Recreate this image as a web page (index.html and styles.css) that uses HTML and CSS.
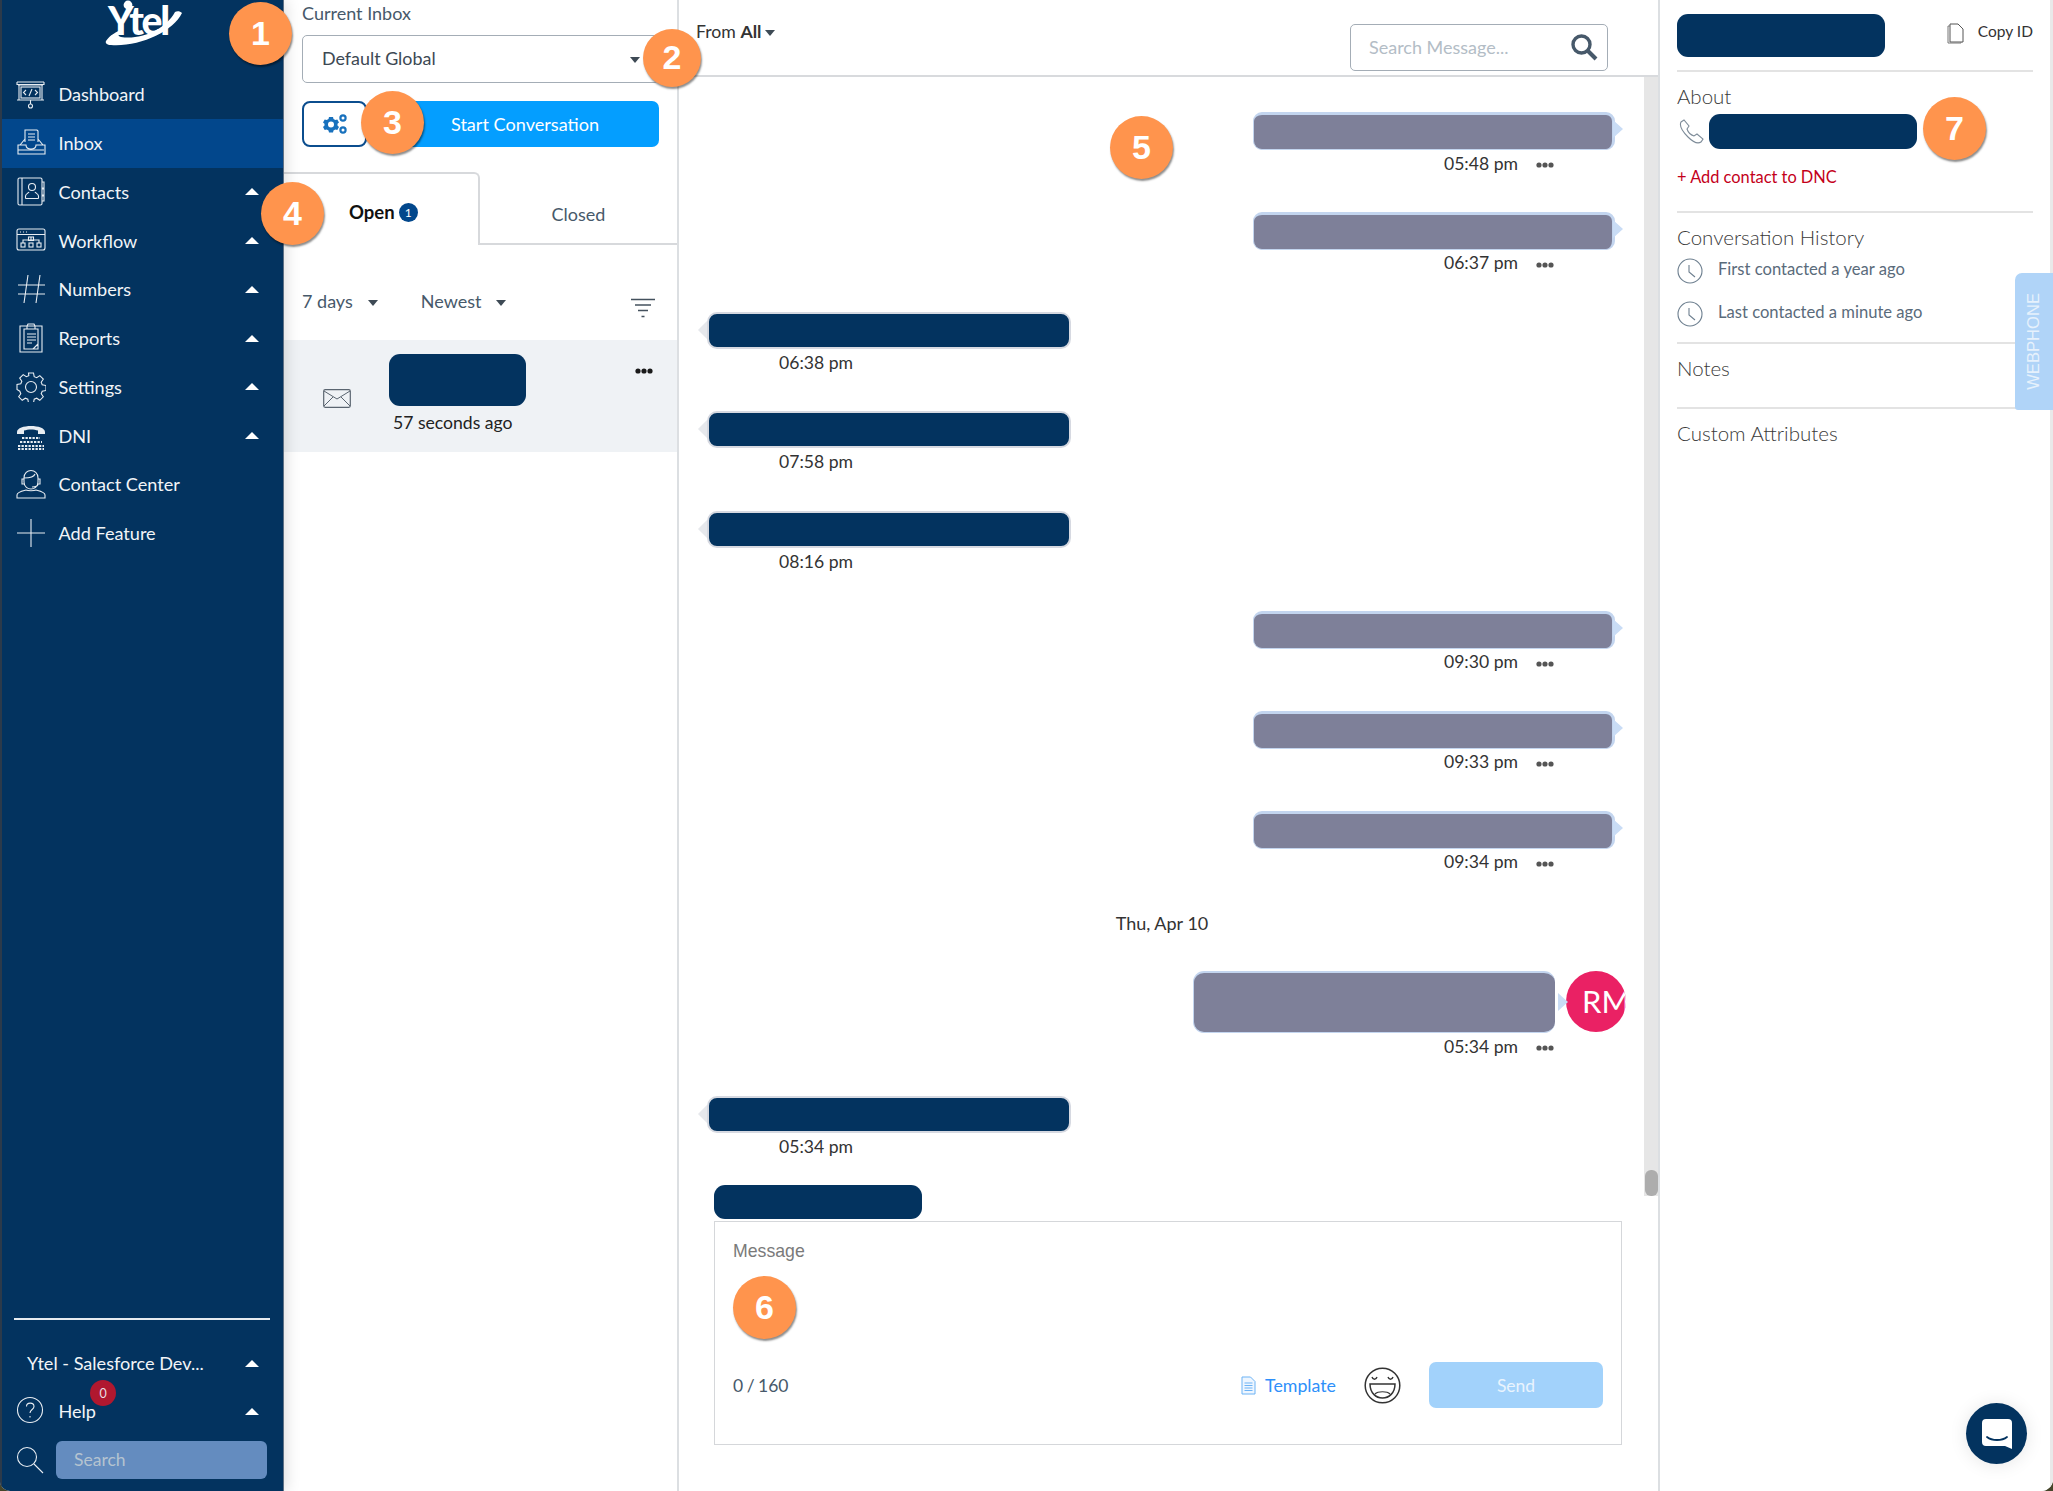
FILE: index.html
```html
<!DOCTYPE html>
<html lang="en">
<head>
<meta charset="utf-8">
<title>Ytel Inbox</title>
<link rel="stylesheet" href="styles.css">
</head>
<body>
<svg class="defs" width="0" height="0" aria-hidden="true">
  <defs>
    <symbol id="dots" viewBox="0 0 18 6"><circle cx="3" cy="3" r="2.6"/><circle cx="9" cy="3" r="2.6"/><circle cx="15" cy="3" r="2.6"/></symbol>
    <symbol id="clock" viewBox="0 0 26 26"><circle cx="13" cy="13" r="12" fill="none" stroke="#6d7f8f" stroke-width="1.1"/><path d="M12 7v7l6 5" fill="none" stroke="#6d7f8f" stroke-width="1.1"/></symbol>
  </defs>
</svg>
<div class="app">
  <aside class="sidebar">
    <div class="logo">
      <svg width="80" height="48" viewBox="0 0 80 48">
        <circle cx="23" cy="5" r="4.4" fill="#fff"/>
        <text class="logo-text" x="3" y="35">Ytel</text>
        <path d="M1 41C5 35 11 32 18 29 13 33 12 36 16 37 36 40 60 30 70 12 72 11 75 11 77 13 68 32 34 47 6 45 2 45 0 43 1 41Z" fill="#fff"/>
      </svg>
    </div>
    <nav class="nav">
      <a class="nav-item"><span class="ico"><svg width="30" height="30" viewBox="0 0 30 30"><path d="M1 3h27M2 6h25M3 6v15M26 6v15M1 21h27M14.500 21v4M1 3v2.500h27V3"/><circle cx="14.500" cy="27" r="2"/><path d="M10 11l-2.500 2.500L10 16M19 11l2.500 2.500L19 16M16 10l-3 7"/><rect x="5" y="8" width="19" height="11"/></svg></span><span class="label">Dashboard</span></a>
      <a class="nav-item active"><span class="ico"><svg width="30" height="30" viewBox="0 0 30 30"><path d="M9 14V2h12l1 1v11M12 6h7M12 9h7M12 12h7M9 11l-5 6M22 11l5 6M2 17h8c0 3 2 4 5 4s5-1 5-4h9v9H2zM2 22h26"/></svg></span><span class="label">Inbox</span></a>
      <a class="nav-item"><span class="ico"><svg width="30" height="30" viewBox="0 0 30 30"><rect x="2" y="1" width="24" height="27" rx="1.500"/><path d="M6 1v27M26 5h2v6h-2M26 12h2v6h-2M26 19h2v5h-2"/><circle cx="16" cy="10" r="3.500"/><path d="M9.500 21.500v-2.500c0-2 3-3 3.500-4M22.500 21.500v-2.500c0-2-3-3-3.500-4M9.500 21.500h13"/></svg></span><span class="label">Contacts</span><span class="up"></span></a>
      <a class="nav-item"><span class="ico"><svg width="30" height="30" viewBox="0 0 30 30"><rect x="1" y="3" width="28" height="21" rx="2"/><path d="M1 8.500h28M4 6h1M7 6h1M10 6h1M15 11v3M7 17v-3h16v3"/><rect x="12.500" y="11" width="5" height="3.500"/><rect x="5" y="17" width="4" height="4"/><rect x="13" y="17" width="4" height="4"/><rect x="21" y="17" width="4" height="4"/></svg></span><span class="label">Workflow</span><span class="up"></span></a>
      <a class="nav-item"><span class="ico"><svg width="30" height="30" viewBox="0 0 30 30"><path d="M2 11h27M2 20h27M12 1L8 29M24 1l-4 28"/></svg></span><span class="label">Numbers</span><span class="up"></span></a>
      <a class="nav-item"><span class="ico"><svg width="30" height="30" viewBox="0 0 30 30"><path d="M4 3h22v26H4zM8 6h14v20h-14zM11 3l1-2h6l1 2v3h-8zM11 11h9M11 14h9M11 17h9M11 20h5M17 26l5-5"/></svg></span><span class="label">Reports</span><span class="up"></span></a>
      <a class="nav-item"><span class="ico"><svg width="30" height="30" viewBox="0 0 30 30"><circle cx="15" cy="15" r="5.500"/><path d="M12.500 1h5l.7 3.700 2.500 1 3.100-2.100 3.500 3.500-2.100 3.100 1 2.500 3.800.8v5l-3.800.7-1 2.500 2.100 3.100-3.500 3.500-3.100-2.100-2.500 1-.7 3.700h-5l-.7-3.700-2.500-1-3.100 2.100-3.500-3.500 2.100-3.100-1-2.500L1 17.500v-5l3.800-.8 1-2.500-2.100-3.100 3.500-3.500 3.100 2.100 2.500-1z"/></svg></span><span class="label">Settings</span><span class="up"></span></a>
      <a class="nav-item"><span class="ico"><svg width="30" height="30" viewBox="0 0 30 30"><path class="solid" d="M1 11C1 3 29 3 29 11v2h-7V9.500C18 8 12 8 8 9.500V13H1z"/><path class="dash" d="M6 17h18M4 21h22M2 25h26M2 28h26"/></svg></span><span class="label">DNI</span><span class="up"></span></a>
      <a class="nav-item"><span class="ico"><svg width="30" height="30" viewBox="0 0 30 30"><path d="M8 9c0-10 14-10 14 0v4c0 5-4 7-7 7s-7-2-7-7zM8 9c4 0 10-1 11-4M22 10h2v5h-2M8 10H6v5h2M22 15c0 2-3 3-6 3M1 29v-3c0-3 5-4 9-5 2 1 8 1 10 0 4 1 9 2 9 5v3z"/></svg></span><span class="label">Contact Center</span></a>
      <a class="nav-item"><span class="ico"><svg width="30" height="30" viewBox="0 0 30 30"><path d="M15 1v28M1 15h28"/></svg></span><span class="label">Add Feature</span></a>
    </nav>
    <div class="side-foot">
      <div class="foot-rule"></div>
      <div class="org"><span class="org-name">Ytel - Salesforce Dev...</span><span class="up"></span></div>
      <div class="nav-item help">
        <span class="ico"><svg width="28" height="28" viewBox="0 0 28 28"><circle cx="14" cy="14" r="12.500"/><path d="M10.500 10.500c0-4.500 7.500-4.500 7.500 0 0 3-4 3-4 6.500M14 20v1.500"/></svg></span>
        <span class="label">Help</span><span class="up"></span>
        <span class="count">0</span>
      </div>
      <div class="side-search">
        <svg width="28" height="28" viewBox="0 0 28 28"><circle cx="11" cy="11" r="9.500"/><path d="M18 18l9 9"/></svg>
        <div class="side-input">Search</div>
      </div>
    </div>
  </aside>

  <section class="inbox">
    <div class="inbox-top">
      <div class="field-label">Current Inbox</div>
      <div class="select">Default Global<span class="caret"></span></div>
      <div class="actions">
        <button class="gear-btn" type="button"><svg width="24" height="20" viewBox="0 0 24 20"><path fill="#1871bd" fill-rule="evenodd" d="M6 3h4l.5 2 1.800 1 2-.6 1.700 3-1.500 1.400v1.800l1.500 1.400-1.700 3-2-.6-1.800 1-.5 2H6l-.5-2-1.800-1-2 .6-1.700-3 1.500-1.400V9.800L0 8.400l1.700-3 2 .6 1.800-1zm2 4.500a3 3 0 1 0 0 6 3 3 0 0 0 0-6z"/><circle cx="20" cy="4" r="2.600" fill="none" stroke="#1871bd" stroke-width="2.200"/><circle cx="20" cy="16" r="2.600" fill="none" stroke="#1871bd" stroke-width="2.200"/></svg></button>
        <button class="start-btn" type="button">Start Conversation</button>
      </div>
    </div>
    <div class="tabs">
      <div class="tab open-tab"><b>Open</b><span class="pill">1</span></div>
      <div class="tab closed-tab">Closed</div>
    </div>
    <div class="filters">
      <span class="flt">7 days<span class="caret"></span></span>
      <span class="flt newest">Newest<span class="caret"></span></span>
      <svg class="flt-ico" width="26" height="20" viewBox="0 0 26 20"><path d="M1 1.500h24M5 7h16M8 12.500h10M11.500 18.500h3" stroke="#44515e" stroke-width="1.300" fill="none"/></svg>
    </div>
    <div class="conv">
      <svg class="env" width="28" height="19" viewBox="0 0 28 19"><rect x=".7" y=".7" width="26.600" height="17.600" rx="1.500" fill="none" stroke="#5a6570" stroke-width="1.200"/><path d="M1 2l13 8 13-8M1 17l9-9M27 17l-9-9" fill="none" stroke="#5a6570" stroke-width="1"/></svg>
      <div class="conv-main">
        <div class="redact conv-name"></div>
        <div class="conv-time">57 seconds ago</div>
      </div>
      <svg class="conv-dots" width="18" height="6"><use href="#dots"/></svg>
    </div>
  </section>

  <main class="chat">
    <header class="chat-head">
      <div class="from">From <b>All</b><span class="caret"></span></div>
      <div class="msg-search"><span>Search Message...</span>
        <svg width="28" height="28" viewBox="0 0 28 28"><circle cx="11.500" cy="11.500" r="8.500" fill="none" stroke="#47596a" stroke-width="3.400"/><path d="M18 18l8 8" stroke="#47596a" stroke-width="4"/></svg>
      </div>
    </header>
    <div class="thread">
      <div class="row out"><div class="bubble"></div><div class="meta"><span>05:48 pm</span><svg width="18" height="6"><use href="#dots"/></svg></div></div>
      <div class="row out"><div class="bubble"></div><div class="meta"><span>06:37 pm</span><svg width="18" height="6"><use href="#dots"/></svg></div></div>
      <div class="row in"><div class="bubble"></div><div class="meta"><span>06:38 pm</span></div></div>
      <div class="row in"><div class="bubble"></div><div class="meta"><span>07:58 pm</span></div></div>
      <div class="row in"><div class="bubble"></div><div class="meta"><span>08:16 pm</span></div></div>
      <div class="row out"><div class="bubble"></div><div class="meta"><span>09:30 pm</span><svg width="18" height="6"><use href="#dots"/></svg></div></div>
      <div class="row out"><div class="bubble"></div><div class="meta"><span>09:33 pm</span><svg width="18" height="6"><use href="#dots"/></svg></div></div>
      <div class="row out"><div class="bubble"></div><div class="meta"><span>09:34 pm</span><svg width="18" height="6"><use href="#dots"/></svg></div></div>
      <div class="date">Thu, Apr 10</div>
      <div class="row out big">
        <div class="big-line"><div class="bubble"></div><div class="avatar"><span>RM</span></div></div>
        <div class="meta"><span>05:34 pm</span><svg width="18" height="6"><use href="#dots"/></svg></div>
      </div>
      <div class="row in last"><div class="bubble"></div><div class="meta"><span>05:34 pm</span></div></div>
    </div>
    <div class="composer">
      <div class="redact to-chip"></div>
      <div class="box">
        <div class="box-label">Message</div>
        <div class="box-row">
          <span class="counter">0 / 160</span>
          <span class="template"><svg width="15" height="19" viewBox="0 0 15 19"><path d="M1 1h8.500L14 5.500V18H1z" fill="#eef6ff" stroke="#6db3f5"/><path d="M3.500 7h8M3.500 9.500h8M3.500 12h8M3.500 14.500h8" stroke="#6db3f5"/></svg>Template</span>
          <svg class="emoji" width="37" height="37" viewBox="0 0 37 37"><circle cx="18.500" cy="18.500" r="17.300" fill="none" stroke="#333" stroke-width="1.500"/><path d="M8 10c1 3 4 3 5 0M24 10c1 3 4 3 5 0" fill="none" stroke="#333" stroke-width="1.400"/><path d="M6 17h25c0 9-6 14-12.500 14S6 26 6 17z" fill="none" stroke="#333" stroke-width="1.500"/><path d="M11 27c3-3 12-3 15 0" fill="none" stroke="#333" stroke-width="1.200"/></svg>
          <button class="send" type="button">Send</button>
        </div>
      </div>
    </div>
    <div class="track"><div class="thumb"></div></div>
  </main>

  <aside class="details">
    <div class="d-top">
      <div class="redact d-name"></div>
      <span class="copy"><svg width="17" height="21" viewBox="0 0 17 21"><path d="M3 1h8l5 5v13H3z" fill="#fff" stroke="#555"/><path d="M3 3H1v17h13v-1" fill="none" stroke="#777"/></svg>Copy ID</span>
    </div>
    <section class="d-sec about">
      <h2>About</h2>
      <div class="phone-row">
        <svg width="25" height="25" viewBox="0 0 25 25"><path d="M2 3l3-2 5 6-2 3c1 3 4 6 7 7l3-2 6 5-2 3c-3 2-8 0-13-5S0 7 2 3z" fill="none" stroke="#7d8b98" stroke-width="1.100"/></svg>
        <div class="redact d-phone"></div>
      </div>
      <a class="dnc">+ Add contact to DNC</a>
    </section>
    <section class="d-sec history">
      <h2>Conversation History</h2>
      <div class="hist"><svg width="26" height="26"><use href="#clock"/></svg><span>First contacted a year ago</span></div>
      <div class="hist"><svg width="26" height="26"><use href="#clock"/></svg><span>Last contacted a minute ago</span></div>
    </section>
    <section class="d-sec notes"><h2>Notes</h2></section>
    <section class="d-sec attrs"><h2>Custom Attributes</h2></section>
    <div class="webphone"><span>WEBPHONE</span></div>
    <div class="chat-fab"><svg width="30" height="30" viewBox="0 0 30 30"><path d="M4 0h22a4 4 0 0 1 4 4v26l-7-3H4a4 4 0 0 1-4-4V4a4 4 0 0 1 4-4z" fill="#fff"/><path d="M5 18c5 4 15 4 20 0" fill="none" stroke="#03335f" stroke-width="1.800" stroke-linecap="round"/></svg></div>
  </aside>

  <div class="mark m1">1</div>
  <div class="mark m2">2</div>
  <div class="mark m3">3</div>
  <div class="mark m4">4</div>
  <div class="mark m5">5</div>
  <div class="mark m6">6</div>
  <div class="mark m7">7</div>
</div>
</body>
</html>
```
FILE: styles.css
```css
* { box-sizing: border-box; }
html, body { margin: 0; height: 100%; background: #45452a; }
body { font-family: Lato, "Open Sans", sans-serif; font-size: 17px; color: #333; overflow: hidden; }
.defs { position: absolute; }
a { text-decoration: none; }
button { font: inherit; padding: 0; cursor: pointer; }
h2 { margin: 0; font-size: 20.500px; line-height: 26px; font-weight: 300; color: #3a3a3a; }

.app { position: relative; display: flex; width: 2053px; height: 1491px; background: #fff; border-radius: 0 0 12px 10px; overflow: hidden; }

/* Sidebar */
.sidebar { position: relative; z-index: 1; width: 284px; flex: none; display: flex; flex-direction: column; background: #03335f; border-left: 2px solid #2c3a4a; border-right: 1px solid #5f7185; box-shadow: 2px 0 14px rgba(0, 0, 0, .14); color: #f2f5f8; }
.logo { height: 70px; padding-left: 103px; }
.logo-text { font-family: Lato, sans-serif; font-weight: 900; font-size: 39px; letter-spacing: -2.200px; fill: #fff; }
.nav { display: flex; flex-direction: column; }
.nav-item { position: relative; height: 48.750px; display: flex; align-items: center; padding: 0 24px 0 14px; color: #f2f5f8; font-size: 18.100px; }
.nav-item.active { background: #02478c; }
.ico { width: 30px; height: 30px; margin-right: 13px; flex: none; }
.ico svg, .side-search svg { display: block; fill: none; stroke: #e8edf2; stroke-width: 1.100; }
.ico .solid { fill: #e8edf2; stroke: none; }
.ico .dash { stroke-width: 2.200; stroke-dasharray: 2.300 1.200; }
.label { flex: 1; margin-left: -.5px; }
.up { width: 0; height: 0; border-left: 7.500px solid transparent; border-right: 7.500px solid transparent; border-bottom: 7.500px solid #fff; flex: none; }
.side-foot { margin-top: auto; padding-bottom: 12px; }
.foot-rule { height: 2px; margin: 0 13px 0 12px; background: #e6ebf0; }
.org { height: 46px; margin-top: 20px; display: flex; align-items: center; justify-content: space-between; padding: 0 24px 0 25px; font-size: 18.100px; }
.help { height: 48px; margin-top: 1px; }
.count { position: absolute; left: 88px; top: -7px; width: 26px; height: 26px; border-radius: 50%; background: #b0182f; color: #e9dfe2; font-size: 12.500px; display: flex; align-items: center; justify-content: center; }
.side-search { display: flex; align-items: center; padding-left: 14px; height: 38px; margin-top: 6px; gap: 12px; }
.side-search svg { flex: none; }
.side-input { width: 211px; height: 38px; padding-left: 18px; border-radius: 6px; background: #648cbf; color: #b5c3d0; font-size: 17.500px; line-height: 38px; }

/* Inbox column */
.inbox { width: 395px; flex: none; border-right: 2px solid #dcdfe2; display: flex; flex-direction: column; }
.inbox-top { padding: 0 18px; height: 172px; }
.field-label { line-height: 26px; height: 26px; color: #47596a; font-size: 18px; }
.select { position: relative; height: 48px; margin-top: 9px; border: 1.500px solid #a4adb6; border-radius: 5px; padding-left: 19px; line-height: 45px; color: #3c4853; font-size: 17.900px; }
.select .caret { position: absolute; right: 18px; top: 21px; margin: 0; }
.caret { display: inline-block; width: 0; height: 0; border-left: 5.500px solid transparent; border-right: 5.500px solid transparent; border-top: 6px solid #3e4a55; }
.actions { display: flex; margin-top: 18px; }
.gear-btn { width: 65px; height: 46px; border: 2px solid #0b4d8e; border-radius: 8px; background: #fff; display: flex; align-items: center; justify-content: center; padding-left: 1px; }
.start-btn { width: 268px; height: 46px; margin-left: 24px; border: 0; border-radius: 7px; background: #049eff; color: #fff; font-size: 18.100px; }
.tabs { display: flex; height: 73px; }
.tab { display: flex; align-items: center; justify-content: center; font-size: 18px; }
.open-tab { width: 196px; border-top: 2px solid #d7d9dc; border-right: 2px solid #d7d9dc; border-radius: 0 6px 0 0; justify-content: flex-start; padding: 5px 0 0 65px; color: #111; }
.open-tab b { font-weight: 700; font-size: 18.500px; }
.pill { width: 19px; height: 19px; margin-left: 4px; border-radius: 50%; background: #02478c; color: #fff; font-size: 12px; display: flex; align-items: center; justify-content: center; }
.closed-tab { flex: 1; border-bottom: 2px solid #d7d9dc; color: #47596a; padding-top: 12px; }
.filters { height: 95px; display: flex; align-items: center; padding: 17px 0 0 18px; color: #47596a; font-size: 18px; }
.flt .caret { margin-left: 15px; vertical-align: 2px; }
.newest { margin-left: 43px; }
.flt-ico { margin-left: auto; margin-right: 21px; margin-top: 13px; }
.conv { height: 112px; background: #eff2f5; display: flex; padding: 14px 24px 0 39px; position: relative; }
.env { margin-top: 35px; flex: none; }
.conv-main { margin-left: 38px; }
.redact { background: #03335f; border-radius: 11px; }
.conv-name { width: 137px; height: 52px; }
.conv-time { margin: 7px 0 0 4px; color: #222; font-size: 17.600px; line-height: 20px; }
.conv-dots { margin-left: auto; margin-top: 14px; fill: #1a1a1a; }

/* Chat column */
.chat { position: relative; width: 981px; flex: none; display: flex; flex-direction: column; border-right: 2px solid #dcdfe2; }
.chat-head { height: 77px; flex: none; border-bottom: 2px solid #d8dadd; padding: 19px 0 0 17px; position: relative; display: flex; justify-content: space-between; }
.from { font-size: 17.700px; line-height: 26px; color: #333; }
.from b { font-weight: 700; }
.from .caret { margin-left: 4px; vertical-align: 2px; }
.msg-search { width: 258px; height: 47px; margin: 5px 50px 0 0; border: 1.500px solid #a4adb6; border-radius: 5px; padding: 0 9px 1px 18px; display: flex; align-items: center; justify-content: space-between; color: #b3bdc6; font-size: 18px; }
.thread { padding: 35px 43px 0 28px; }
.row { height: 99.800px; }
.bubble { position: relative; height: 38px; flex: none; }
.out .bubble { width: 362px; margin-left: auto; background: #7e8099; border: 1px solid #c3d5ef; border-top-width: 3px; border-right-width: 3px; border-radius: 9px; }
.out .bubble::after { content: ""; position: absolute; right: -11px; top: 5px; border-left: 10px solid #c9dcf5; border-top: 9px solid transparent; border-bottom: 9px solid transparent; }
.in .bubble { width: 364px; height: 37px; background: #03335f; border: 2px solid #d6d9e1; border-radius: 10px; }
.in .bubble::after { content: ""; position: absolute; left: -11px; top: 7px; border-right: 9px solid #e6e8ec; border-top: 9px solid transparent; border-bottom: 9px solid transparent; }
.meta { display: flex; align-items: center; height: 26px; color: #333; font-size: 17.600px; }
.out .meta { justify-content: flex-end; padding-right: 61px; }
.out .meta svg { margin-left: 18px; margin-top: 4px; fill: #555; }
.in .meta { padding-left: 72px; height: 27px; }
.date { height: 61px; line-height: 26px; text-align: center; margin-left: 2px; color: #333; font-size: 18px; }
.row.big { height: 125px; }
.big-line { display: flex; align-items: flex-start; }
.big .bubble { width: 362px; height: 62px; margin-left: 486px; border-radius: 11px; border-width: 2px 0 1px 1px; }
.big .bubble::after { right: -13px; top: 20px; }
.avatar { width: 60px; height: 61px; margin-left: 11px; border-radius: 50%; background: #ea2164; color: #fff; font-size: 31px; line-height: 61px; padding-left: 16px; overflow: hidden; white-space: nowrap; flex: none; }
.big .meta { height: 26px; }
.row.last { height: 89px; }
.composer { margin-left: 35px; width: 908px; }
.to-chip { width: 208px; height: 34px; }
.box { height: 224px; margin-top: 2px; border: 1.500px solid #d5d7da; padding: 16px 18px 0 18px; }
.box-label { line-height: 26px; color: #7a7a7a; font-family: "Liberation Sans", Arial, sans-serif; font-size: 17.700px; }
.box-row { display: flex; align-items: center; margin-top: 98px; height: 46px; }
.counter { color: #47596a; font-size: 17.500px; word-spacing: -1px; margin-right: auto; }
.template { display: flex; align-items: center; gap: 9px; color: #2e90fa; font-size: 17.800px; }
.emoji { margin: 0 28px; }
.send { width: 174px; height: 46px; border: 0; border-radius: 7px; background: #a2d2fb; color: #e9f4fe; font-size: 17.500px; }
.track { position: absolute; right: 0; top: 77px; width: 14px; height: 1119px; background: #e6e6e6; }
.thumb { position: absolute; left: 1px; bottom: 0; width: 13px; height: 26px; border-radius: 6px; background: #adadad; }

/* Details column */
.details { position: relative; flex: 1; padding: 0 17px 0 17px; border-right: 3px solid #e9e9e9; background: #fff; }
.d-top { height: 72px; padding-top: 14px; display: flex; justify-content: space-between; border-bottom: 2px solid #e3e3e3; }
.d-name { width: 208px; height: 43px; }
.copy { display: flex; align-items: flex-start; gap: 14px; color: #333; font-size: 15.500px; line-height: 20px; padding-top: 7px; }
.copy svg { margin-top: 2px; }
.d-sec { border-bottom: 2px solid #e3e3e3; }
.about { height: 141px; padding-top: 11px; }
.phone-row { display: flex; align-items: center; margin-top: 5px; gap: 4.500px; padding-left: 2px; }
.d-phone { width: 208px; height: 35px; }
.dnc { display: block; margin-top: 16px; color: #c4001a; font-size: 16.400px; line-height: 24px; }
.history { height: 131px; padding-top: 11px; }
.hist { display: flex; gap: 15px; margin-top: 8px; height: 25px; margin-bottom: 18px; color: #5a6b7b; font-size: 16.600px; }
.hist + .hist { margin-top: 0; }
.hist span { line-height: 20px; padding-top: 1px; }
.notes { height: 65px; padding-top: 11px; }
.attrs { border-bottom: 0; padding-top: 11px; }
.webphone { position: absolute; right: -3px; top: 273px; width: 38px; height: 137px; background: #b0d4f8; border-radius: 7px 0 0 3px; display: flex; align-items: center; justify-content: center; }
.webphone span { writing-mode: vertical-rl; transform: rotate(180deg); color: #e6f1fc; font-family: "Liberation Sans", Arial, sans-serif; font-size: 16.600px; font-weight: 400; }
.chat-fab { position: absolute; left: 306px; top: 1403px; width: 61px; height: 61px; border-radius: 50%; background: #03335f; box-shadow: 0 1px 18px rgba(0, 0, 0, .1); display: flex; align-items: center; justify-content: center; }

/* Numbered callouts lying over the app */
.mark { position: absolute; z-index: 5; width: 63px; height: 63px; border-radius: 50%; background: #ff944d; box-shadow: 1px 2px 2px rgba(0, 0, 0, .45); color: #fff; font-family: "Liberation Sans", Arial, sans-serif; font-weight: 700; font-size: 34px; line-height: 62px; text-align: center; }
.m1 { left: 229px; top: 2px; }
.m2 { left: 643px; top: 29px; width: 58px; height: 58px; line-height: 57px; }
.m3 { left: 361px; top: 91px; }
.m4 { left: 261px; top: 182px; }
.m5 { left: 1110px; top: 116px; }
.m6 { left: 733px; top: 1276px; }
.m7 { left: 1923px; top: 97px; }
```
